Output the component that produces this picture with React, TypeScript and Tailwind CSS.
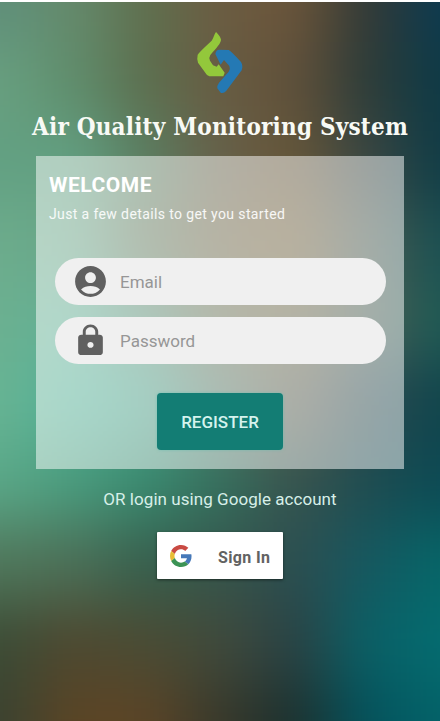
import React from "react";
import { MdAccountCircle, MdLock } from "react-icons/md";

const wallpaper: string[][] = [
  ["#5f8f7a", "#658a6c", "#5f6f4e", "#6c5c42", "#6b553a", "#343a36", "#0c3a50"],
  ["#68a080", "#5f8d6c", "#5c6e4e", "#685c42", "#60503a", "#2d3c38", "#0e3a46"],
  ["#62a082", "#62a082", "#5a7e62", "#66604a", "#665638", "#3a4642", "#103c46"],
  ["#6cac8c", "#6aa588", "#64785c", "#6e6648", "#74623c", "#4a5a50", "#1a5052"],
  ["#6cb090", "#60b096", "#5a8f78", "#6a7055", "#6a6648", "#4c5e54", "#1e5a54"],
  ["#68b494", "#50b096", "#48a088", "#567868", "#5c5c4c", "#2c4a50", "#10444c"],
  ["#5aa888", "#4a9c7e", "#3a8a70", "#35705e", "#38544e", "#1f4c50", "#0c4a54"],
  ["#50785c", "#4c7058", "#36604e", "#36564c", "#2c4e50", "#165860", "#066668"],
  ["#3c4c36", "#4e4830", "#4a4c34", "#404a3c", "#2a4244", "#0a6066", "#046c70"],
  ["#3a4230", "#5c4424", "#5c4426", "#38382a", "#1c302e", "#04525c", "#046268"],
];

// Soft out-of-focus backdrop: colour patches melted together by a blur.
function Wallpaper() {
  const cw = 440 / 6;
  const ch = 80;
  return (
    <svg className="absolute inset-0 h-full w-full" viewBox="0 0 440 719" preserveAspectRatio="none" aria-hidden="true">
      <defs>
        <filter id="melt" filterUnits="userSpaceOnUse" x="-200" y="-200" width="840" height="1120" colorInterpolationFilters="sRGB">
          <feGaussianBlur stdDeviation="30" />
        </filter>
      </defs>
      <g filter="url(#melt)">
        {wallpaper.map((row, r) =>
          row.map((fill, c) => {
            const left = c === 0 ? -180 : (c - 0.5) * cw;
            const right = c === row.length - 1 ? 620 : (c + 0.5) * cw;
            const top = r === 0 ? -180 : (r - 0.5) * ch;
            const bottom = r === wallpaper.length - 1 ? 900 : (r + 0.5) * ch;
            return <rect key={`${r}-${c}`} x={left} y={top} width={right - left + 0.6} height={bottom - top + 0.6} fill={fill} />;
          }),
        )}
      </g>
    </svg>
  );
}

function Logo() {
  return (
    <svg className="h-[64px] w-[48px]" viewBox="50 33 144 192" aria-hidden="true">
      <path
        d="M110 36 C116 42 125 52 125 60 C123 72 113 82 93 105 Q88 112 92 122 L101 136 L112 140 L118 133 L136 158 L132 169 L90 169 Q83 168 79 160 L56 128 Q52 118 55 104 Q60 96 97 62 C103 54 105 42 110 36 Z"
        fill="#93c83b"
      />
      <path
        d="M108 102 Q110 89 120 89 L148 90 Q154 92 185 126 Q192 138 187 151 L141 212 Q133 221 124 218 L114 205 Q113 196 119 188 L148 155 Q154 146 150 138 L134 120 L124 134 Z"
        fill="#2479b4"
      />
    </svg>
  );
}

function GoogleMark() {
  return (
    <svg className="h-[22px] w-[22px]" viewBox="0 0 48 48" aria-hidden="true">
      <path fill="#c94a43" d="M24 9.5c3.54 0 6.71 1.22 9.21 3.6l6.85-6.85C35.9 2.38 30.47 0 24 0 14.62 0 6.51 5.38 2.56 13.22l7.98 6.19C12.43 13.72 17.74 9.5 24 9.5z" />
      <path fill="#4678b8" d="M46.98 24.55c0-1.57-.15-3.09-.38-4.55H24v9.02h12.94c-.58 2.96-2.26 5.48-4.78 7.18l7.73 6c4.51-4.18 7.09-10.36 7.09-17.65z" />
      <path fill="#e8bd35" d="M10.53 28.59c-.48-1.45-.76-2.99-.76-4.59s.27-3.14.76-4.59l-7.98-6.19C.92 16.46 0 20.12 0 24c0 3.88.92 7.54 2.56 10.78l7.97-6.19z" />
      <path fill="#3c9355" d="M24 48c6.48 0 11.93-2.13 15.89-5.81l-7.73-6c-2.15 1.45-4.92 2.3-8.16 2.3-6.26 0-11.57-4.22-13.47-9.91l-7.98 6.19C6.51 42.62 14.62 48 24 48z" />
    </svg>
  );
}

function Field({ icon, label }: { icon: React.ReactNode; label: string }) {
  return (
    <label className="flex h-[47px] w-[331px] items-center rounded-full bg-[#f0f0f0] pl-[17px]">
      <span className="flex w-[37px] justify-center text-[#606060]">{icon}</span>
      <span className="ml-[11px] text-[17px] leading-5 text-[#969696]">{label}</span>
    </label>
  );
}

export default function App() {
  return (
    <div className="h-[721px] w-[440px] bg-white pt-[2px] font-['Roboto',sans-serif]">
      <main className="relative h-[719px] overflow-hidden">
        <Wallpaper />
        <div className="relative flex h-full flex-col items-center">
          <div className="mt-[29px] h-[64px]">
            <Logo />
          </div>
          <h1 className="mt-[16px] h-[32px] whitespace-nowrap font-['DejaVu_Serif',serif] text-[24px] leading-8 font-bold tracking-[0.2px] text-[#f8faf5] [font-stretch:condensed]">
            Air Quality Monitoring System
          </h1>
          <section className="mt-[13px] flex h-[313px] w-[368px] flex-col bg-white/50 pt-[17px]">
            <h2 className="pl-[13px] text-[21px] leading-6 font-bold tracking-[0.55px] text-white">WELCOME</h2>
            <p className="mt-[7px] pl-[13px] text-[14px] leading-5 tracking-[0.38px] text-white/90">Just a few details to get you started</p>
            <div className="mt-[34px] ml-[19px] flex flex-col gap-[12px]">
              <Field icon={<MdAccountCircle className="size-[37px] shrink-0" />} label="Email" />
              <Field icon={<MdLock className="h-[35px] w-[37px] shrink-0" preserveAspectRatio="none" />} label="Password" />
            </div>
            <button className="mt-[29px] ml-[121px] h-[57px] w-[126px] rounded-[4px] bg-[#137d74] pt-[2px] text-[17px] font-medium text-[#d5f3ee] shadow-[0_0_3px_rgba(100,190,175,0.7)]">
              REGISTER
            </button>
          </section>
          <p className="mt-[18px] whitespace-nowrap text-[17px] leading-6 tracking-[0.05px] text-[#d7efe8]">OR login using Google account</p>
          <button className="mt-[21px] flex h-[47px] w-[126px] items-center rounded-[1px] bg-white pl-[13px] shadow-[0_1px_3px_rgba(0,0,0,0.5)]">
            <GoogleMark />
            <span className="ml-[26px] whitespace-nowrap pt-[4px] text-[16px] leading-5 font-bold tracking-[0.35px] text-[#626262]">Sign In</span>
          </button>
        </div>
      </main>
    </div>
  );
}
